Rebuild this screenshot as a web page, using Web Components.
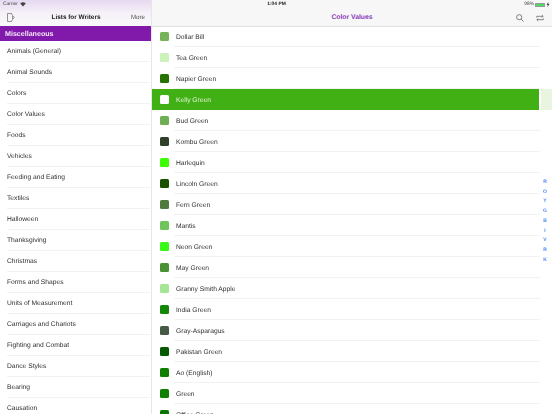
<!DOCTYPE html>
<html><head><meta charset="utf-8"><style>
html,body{margin:0;padding:0;background:#fff;overflow:hidden}
body{width:552px;height:414px;font-family:"Liberation Sans",Arial,sans-serif;color:#333;text-rendering:geometricPrecision}
app-shell{opacity:.999}
</style></head><body>
<app-shell></app-shell>
<script>
const define=(name,html,init)=>customElements.define(name,class extends HTMLElement{
  connectedCallback(){if(this.shadowRoot)return;const r=this.attachShadow({mode:'open'});r.innerHTML=html(this);init&&init(r,this);}
});
define('status-bar',()=>`<style>
:host{position:absolute;left:0;top:0;width:552px;box-sizing:border-box;display:grid;grid-template-columns:1fr auto 1fr;align-items:center;height:9px;padding:0 2px 0 3px;font-size:4.9px;color:#444}
.r{display:flex;justify-content:flex-end;align-items:center;gap:1px}
.l{display:flex;align-items:center;gap:2px}
.b{width:10px;height:4px;background:#4cd964;border:.5px solid #999;box-sizing:border-box;border-radius:.5px}
</style><div class="l">Carrier <svg width="6" height="5" viewBox="0 0 6 5"><path d="M3 4.6.2 1.6a4 4 0 0 1 5.6 0z" fill="#444"/></svg></div><div style="font-weight:bold;color:#222">1:04 PM</div><div class="r">98% <span class="b"></span><svg width="4" height="5" viewBox="0 0 4 5"><path d="M2.4 0 .6 2.8h1.2L1.4 5l2-3H2.2z" fill="#333"/></svg></div>`);
define('side-row',(h)=>`<style>
:host{display:flex;align-items:center;height:21px;box-sizing:border-box;margin:0 1px 0 7px;padding-top:1px;font-size:6.7px;color:#2e2e2e;border-bottom:1px solid #f2f2f2;white-space:nowrap}
</style><slot></slot>`);
define('color-row',(h)=>`<style>
:host{display:flex;align-items:center;height:21px;box-sizing:border-box;position:relative;font-size:6.7px;color:#2e2e2e;white-space:nowrap}
.sw{width:8.5px;height:8.5px;margin:0 7.5px 0 8px;border-radius:1.5px;flex:none;background:var(--c)}
.t{flex:1;align-self:stretch;display:flex;align-items:center;box-sizing:border-box;padding-top:2px;border-bottom:1px solid #f2f2f2;margin-right:12px;margin-left:-2px;padding-left:2px}
:host([sel]){color:#e8f5dd;background:linear-gradient(to right,#41b014 0,#41b014 387px,#fff 387px,#fff 389px,#e9f5e1 389px)}
:host([sel]) .t{border-color:transparent}
</style><span class="sw" style="--c:${h.getAttribute('c')}"></span><span class="t"><slot></slot></span>`);
define('index-rail',()=>`<style>
:host{position:absolute;right:3px;top:177px;display:grid;grid-auto-rows:9.75px;justify-items:center;align-items:center;font-size:5px;font-weight:bold;color:#4a8af0;width:8px}
</style>${[...'ROYGBIVRK'].map(c=>`<span>${c}</span>`).join('')}`);
define('app-shell',()=>{
const L=['Animals (General)','Animal Sounds','Colors','Color Values','Foods','Vehicles','Feeding and Eating','Textiles','Halloween','Thanksgiving','Christmas','Forms and Shapes','Units of Measurement','Carriages and Chariots','Fighting and Combat','Dance Styles','Bearing','Causation'];
const C=[['Dollar Bill','#74b35a'],['Tea Green','#cbf2b8'],['Napier Green','#267300'],['Kelly Green','#fff',1],['Bud Green','#6fae55'],['Kombu Green','#2f3f29'],['Harlequin','#3cff00'],['Lincoln Green','#1c5000'],['Fern Green','#4e7a3e'],['Mantis','#6fc45b'],['Neon Green','#36fa14'],['May Green','#4a9136'],['Granny Smith Apple','#a6e595'],['India Green','#138808'],['Gray-Asparagus','#465945'],['Pakistan Green','#055a00'],['Ao (English)','#0e7f00'],['Green','#0e7f00'],['Office Green','#0a7500']];
return `<style>
:host{display:flex;width:552px;height:414px;overflow:hidden;position:relative}
.side{width:152px;flex:none;border-right:1px solid #e6e6e6;box-sizing:border-box;height:414px;overflow:hidden}
.top{height:26px;box-sizing:border-box;padding-top:9px;background:linear-gradient(#e6d9f2,#f5f1f8 50%,#f9f9f9);display:flex}
.nav{flex:1;display:grid;grid-template-columns:1fr auto 1fr;align-items:center;padding:0 6px 0 7px;font-size:6.4px;color:#222}
.nav b{font-size:6.4px}.nav .m{text-align:right;color:#555;font-size:6.2px}
.hd{height:15px;background:#8119ab;color:#f3e6f8;font-weight:bold;font-size:7.1px;display:flex;align-items:center;padding-left:5px}
.main{flex:1;min-width:0;position:relative;height:414px;overflow:hidden}
.mt{height:27px;box-sizing:border-box;padding-top:9px;background:#f7f7f7;border-bottom:1px solid #e0e0e0;display:flex}
.mn{flex:1;display:grid;grid-template-columns:1fr auto 1fr;align-items:center;padding:0 8px 0 0}
.mn b{font-size:6.8px;color:#8a3bb8;padding-left:8px}
.ic{display:flex;justify-content:flex-end;gap:12px;align-items:center}
.list{margin-top:-1px}
</style>
<div class="side"><div class="top"><div class="nav">
<svg width="8" height="9" viewBox="0 0 8 9" fill="none" stroke="#666" stroke-width=".7"><path d="M.5.5h4l1 2v4l-1 2h-4zM6 3.2 7.4 4.5 6 5.8"/></svg><b>Lists for Writers</b><span class="m">More</span></div></div>
<div class="hd">Miscellaneous</div>
${L.map(t=>`<side-row>${t}</side-row>`).join('')}</div>
<div class="main"><div class="mt"><div class="mn"><span></span><b>Color Values</b><div class="ic">
<svg width="8" height="8" viewBox="0 0 9 9" fill="none" stroke="#555" stroke-width=".8"><circle cx="3.6" cy="3.6" r="2.9"/><path d="M5.7 5.7 8.6 8.6"/></svg>
<svg width="8" height="8" viewBox="0 0 9 9" fill="none" stroke="#555" stroke-width=".8"><path d="M.8 4V2.6h7M6.6 1.2l1.4 1.4L6.6 4M8.2 5v1.4H1.2M2.4 5 1 6.4l1.4 1.4"/></svg></div></div></div>
<div class="list">${C.map(c=>`<color-row c="${c[1]}"${c[2]?' sel':''}>${c[0]}</color-row>`).join('')}</div>
</div><index-rail></index-rail><status-bar></status-bar>`;});
</script></body></html>
